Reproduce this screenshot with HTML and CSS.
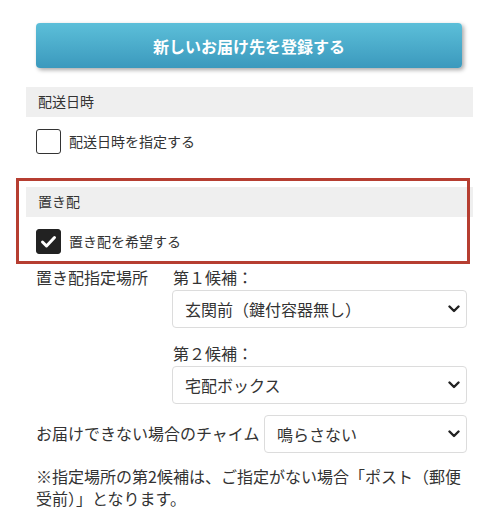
FILE: index.html
```html
<!DOCTYPE html>
<html lang="ja">
<head>
<meta charset="utf-8">
<link rel="stylesheet" href="styles.css">
</head>
<body>
<div class="page">
  <div class="btn-wrap"><button class="btn-new">新しいお届け先を登録する</button></div>

  <section class="sec">
    <div class="sec-head">配送日時</div>
    <label class="check-row">
      <span class="box"></span>
      <span class="check-label">配送日時を指定する</span>
    </label>
  </section>

  <section class="sec sec-oki">
    <div class="sec-head">置き配</div>
    <label class="check-row">
      <span class="box checked">
        <svg viewBox="0 0 25 25" width="25" height="25"><path d="M6.5 13 L10.5 17 L18.5 8.5" fill="none" stroke="#fff" stroke-width="3" stroke-linecap="round" stroke-linejoin="round"/></svg>
      </span>
      <span class="check-label">置き配を希望する</span>
    </label>
    <div class="highlight"></div>
  </section>

  <div class="place">
    <div class="place-label">置き配指定場所</div>
    <div class="place-fields">
      <div class="field-label">第１候補：</div>
      <select class="sel"><option>玄関前（鍵付容器無し）</option></select>
      <div class="field-label second">第２候補：</div>
      <select class="sel"><option>宅配ボックス</option></select>
    </div>
  </div>

  <div class="chime">
    <div class="chime-label">お届けできない場合のチャイム</div>
    <select class="sel sel-chime"><option>鳴らさない</option></select>
  </div>

  <p class="note">※指定場所の第2候補は、ご指定がない場合「ポスト（郵便受前）」となります。</p>
</div>
</body>
</html>
```
FILE: styles.css
```css
* { box-sizing: border-box; }
html, body { margin: 0; padding: 0; background: #fff; }
body {
  font-family: "Noto Sans CJK JP", "Noto Sans", sans-serif;
  color: #333;
  font-size: 16px;
}
.page {
  width: 447px;
  margin-left: 26px;
  padding-top: 23px;
}
.btn-wrap { padding-left: 10px; }
.btn-new {
  display: block;
  width: 426px;
  height: 45px;
  border: none;
  border-radius: 4px;
  background: linear-gradient(#5cbfd9, #3b99bd);
  color: #fff;
  font-family: inherit;
  font-size: 16px;
  font-weight: bold;
  box-shadow: 2px 2px 4px rgba(0,0,0,0.35);
  padding: 0;
}
.sec { margin-top: 19px; }
.sec-oki { margin-top: 33px; position: relative; }
.sec-head {
  height: 30px;
  background: #efefef;
  font-size: 14px;
  line-height: 29px;
  padding-left: 12px;
}
.check-row {
  display: flex;
  align-items: center;
  margin: 12px 0 0 10px;
  height: 25px;
}
.box {
  width: 25px;
  height: 25px;
  border: 1px solid #333;
  border-radius: 3px;
  background: #fff;
  display: block;
}
.box.checked { background: #222; border-color: #222; }
.box.checked svg { display: block; margin: -1px; }
.check-label { font-size: 14px; margin-left: 8px; margin-top: -2px; }
.highlight {
  position: absolute;
  left: -10px;
  right: 3px;
  top: -9px;
  bottom: -10px;
  border: 3px solid #b63e31;
  pointer-events: none;
}
.place {
  display: flex;
  margin: 12px 0 0 10px;
}
.place-label {
  width: 136px;
  line-height: 22px;
}
.place-fields {
  width: 295px;
  display: flex;
  flex-direction: column;
}
.field-label { line-height: 22px; padding-left: 1px; }
.field-label.second { margin-top: 14px; }
.sel {
  -webkit-appearance: none;
  appearance: none;
  width: 295px;
  height: 38px;
  margin-top: 2px;
  border: 1px solid #dcdcdc;
  border-radius: 4px;
  background: #fff url("data:image/svg+xml;utf8,<svg xmlns='http://www.w3.org/2000/svg' width='12' height='8' viewBox='0 0 12 8'><path d='M1.5 1.5 L6 6 L10.5 1.5' fill='none' stroke='%23222' stroke-width='2.4' stroke-linecap='round' stroke-linejoin='round'/></svg>") no-repeat right 6px center;
  font-family: inherit;
  font-size: 16px;
  color: #333;
  padding: 0 24px 0 12px;
}
.chime {
  display: flex;
  align-items: center;
  margin: 11px 0 0 10px;
}
.chime-label { width: 228px; white-space: nowrap; margin-top: -2px; }
.sel-chime { width: 203px; margin-top: 0; }
.note {
  margin: 12px 0 0 10px;
  width: 431px;
  line-height: 22px;
}
```
